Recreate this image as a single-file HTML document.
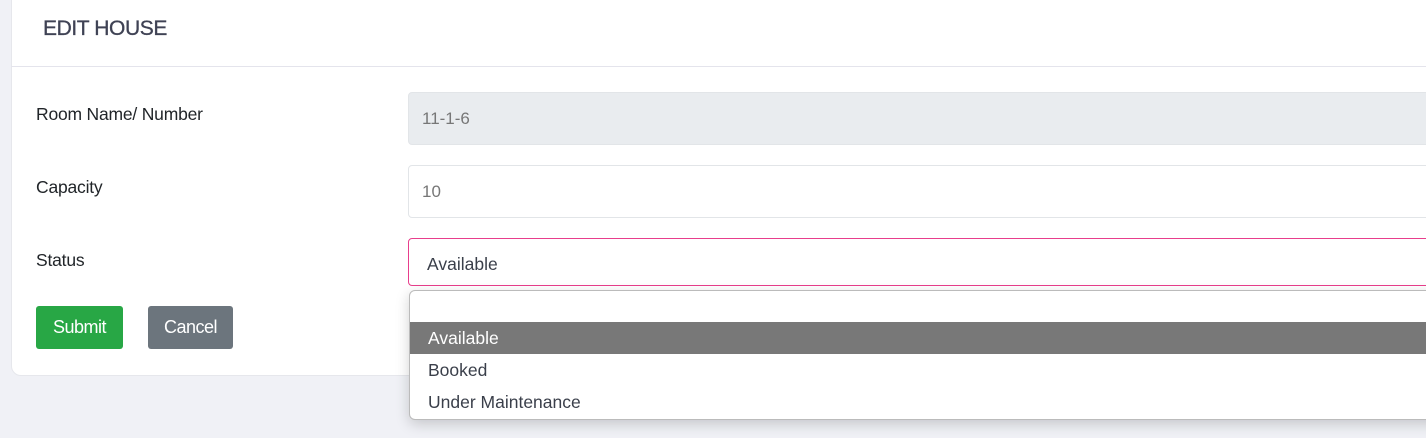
<!DOCTYPE html>
<html><head><style>
body{margin:0;width:1426px;height:438px;background:#f0f1f6;font-family:"Liberation Sans",sans-serif;overflow:hidden;position:relative}
.card{position:absolute;left:11px;top:-10px;width:1450px;height:384px;background:#fff;border-radius:10px;border:1px solid #e6e7ec}
.title{position:absolute;left:43px;top:17px;font-size:21px;color:#3f4254;letter-spacing:-0.4px;-webkit-text-stroke:0.3px #3f4254}
.hr{position:absolute;left:11px;top:66px;width:1420px;height:1px;background:#e4e4ec}
.lbl{position:absolute;left:36px;font-size:17.5px;color:#212529;letter-spacing:-0.2px}
.inp{position:absolute;left:408px;width:1040px;border:1px solid #e2e5e8;border-radius:4px;box-sizing:border-box;font-size:17px;color:#777;padding-left:13px}
.btn{position:absolute;top:306px;height:43px;border-radius:3px;color:#fff;font-size:18px;text-align:center;line-height:43px;letter-spacing:-0.5px}
.dd{position:absolute;left:409px;top:290px;width:1040px;height:128px;background:#fff;border:1px solid #bbb;border-radius:6px;box-shadow:0 4px 14px rgba(0,0,0,.18);overflow:hidden}
.it{position:absolute;left:0;width:100%;height:32px;line-height:32px;font-size:17.5px;color:#3a3f4a;padding-left:18px;box-sizing:border-box}
</style></head><body>
<div class="card"></div>
<div class="title">EDIT HOUSE</div>
<div class="hr"></div>
<div class="lbl" style="top:104px">Room Name/ Number</div>
<div class="lbl" style="top:177px">Capacity</div>
<div class="lbl" style="top:250px">Status</div>
<div class="inp" style="top:92px;height:53px;line-height:51px;background:#e9ecef">11-1-6</div>
<div class="inp" style="top:165px;height:53px;line-height:51px">10</div>
<div class="inp" style="top:238px;height:48px;line-height:50px;border-color:#e83e8c;color:#3a3f4a;padding-left:18px;font-size:17.5px">Available</div>
<div class="btn" style="left:36px;width:87px;background:#28a745">Submit</div>
<div class="btn" style="left:148px;width:85px;background:#6c757d">Cancel</div>
<div class="dd">
<div class="it" style="top:31px;background:#787878;color:#fff">Available</div>
<div class="it" style="top:63px">Booked</div>
<div class="it" style="top:95px">Under Maintenance</div>
</div>
</body></html>
